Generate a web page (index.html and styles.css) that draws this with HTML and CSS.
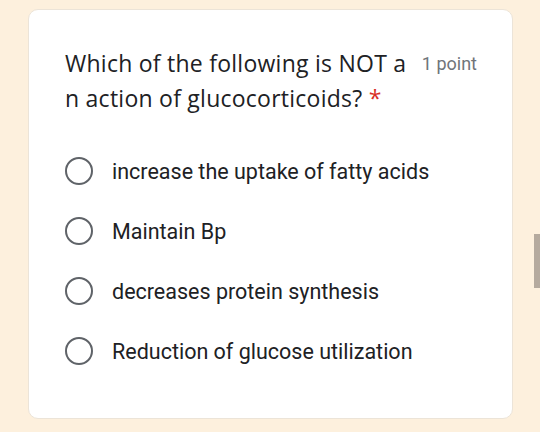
FILE: index.html
```
<!DOCTYPE html>
<html>
<head>
<meta charset="utf-8">
<link rel="stylesheet" href="styles.css">
</head>
<body>
<div class="page">
  <div class="card">
    <div class="header">
      <div class="question">Which of the following is NOT a<br>n action of glucocorticoids? <span class="req">*</span></div>
      <div class="points">1 point</div>
    </div>
    <div class="options">
      <div class="option"><span class="radio"></span><span class="label">increase the uptake of fatty acids</span></div>
      <div class="option"><span class="radio"></span><span class="label">Maintain Bp</span></div>
      <div class="option"><span class="radio"></span><span class="label">decreases protein synthesis</span></div>
      <div class="option"><span class="radio"></span><span class="label">Reduction of glucose utilization</span></div>
    </div>
  </div>
  <div class="scrollbar"></div>
</div>
</body>
</html>
```
FILE: styles.css
```
html, body {
  margin: 0;
  padding: 0;
  width: 540px;
  height: 432px;
  overflow: hidden;
  background: #fdf0dd;
}
.page {
  position: relative;
  width: 540px;
  height: 432px;
  padding: 9px 0 0 28px;
  box-sizing: border-box;
}
.card {
  width: 485px;
  height: 410px;
  box-sizing: border-box;
  background: #ffffff;
  border: 1px solid #ece4d8;
  border-radius: 10px;
  padding: 36px 35px 0 36px;
}
.header {
  display: flex;
  align-items: flex-start;
  justify-content: space-between;
}
.question {
  font-family: "Open Sans", sans-serif;
  font-size: 23px;
  line-height: 35px;
  color: #202124;
  letter-spacing: 0.25px;
}
.req {
  color: #d93025;
}
.points {
  font-family: Roboto, sans-serif;
  font-size: 18px;
  line-height: 35px;
  color: #70757a;
}
.options {
  display: flex;
  flex-direction: column;
  gap: 32px;
  margin-top: 41px;
}
.option {
  display: flex;
  align-items: center;
  height: 28px;
}
.radio {
  width: 28px;
  height: 28px;
  box-sizing: border-box;
  border: 2.5px solid #5f6368;
  border-radius: 50%;
  margin-right: 19px;
  flex: none;
}
.label {
  font-family: Roboto, sans-serif;
  font-size: 21.5px;
  color: #202124;
}
.scrollbar {
  position: absolute;
  left: 534px;
  top: 234px;
  width: 6px;
  height: 54px;
  background: #b5aa9e;
}
```
